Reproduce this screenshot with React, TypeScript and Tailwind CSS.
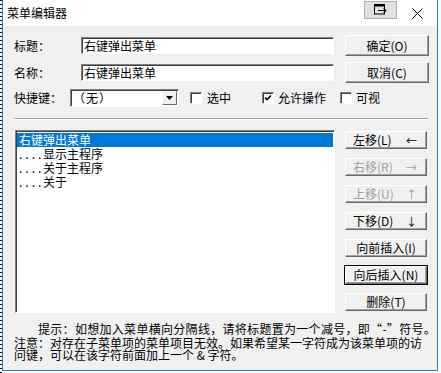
import React from "react";

function Btn({
  label,
  arrow,
  disabled = false,
  isDefault = false,
}: {
  label: string;
  arrow?: string;
  disabled?: boolean;
  isDefault?: boolean;
}) {
  return (
    <div
      className={
        isDefault
          ? "h-[20px] w-[84px] border border-black"
          : "h-[20px] w-[84px] border border-transparent"
      }
    >
      <div
        className={
          "flex h-full w-full items-center border border-t-white border-l-white border-r-[#696969] border-b-[#696969] bg-[#f0f0f0] shadow-[inset_-1px_-1px_0_#a0a0a0] text-[12px] leading-[12px] " +
          (arrow ? "justify-between pl-[7px] pr-[9px] " : "justify-center ") +
          (disabled ? "text-[#a0a0a0]" : "text-black")
        }
      >
        <span>{label}</span>
        {arrow && <span className="text-[11px]">{arrow}</span>}
      </div>
    </div>
  );
}

function TopBtn({ label }: { label: string }) {
  return (
    <div className="flex h-[21px] w-[84px] items-center justify-center border border-t-white border-l-white border-r-[#696969] border-b-[#696969] bg-[#f0f0f0] shadow-[inset_-1px_-1px_0_#a0a0a0] text-[12px] leading-[12px]">
      {label}
    </div>
  );
}

function Check({ checked = false }: { checked?: boolean }) {
  return (
    <div className="flex h-[12px] w-[12px] items-center justify-center border border-t-[#808080] border-l-[#808080] border-r-white border-b-white bg-white shadow-[inset_1px_1px_0_#404040]">
      {checked && (
        <svg width="8" height="8" viewBox="0 0 8 8">
          <path d="M1 3.5 L3 5.5 L7 1.5" stroke="#000" strokeWidth="1.6" fill="none" />
        </svg>
      )}
    </div>
  );
}

function TextBox({ value }: { value: string }) {
  return (
    <div className="flex h-[17px] w-[253px] items-center border border-t-[#808080] border-l-[#808080] border-r-white border-b-white bg-white pl-[2px] shadow-[inset_1px_1px_0_#404040] text-[12px] leading-[12px]">
      {value}
    </div>
  );
}

const rows = [
  { text: "右键弹出菜单", level: 0 },
  { text: "显示主程序", level: 1 },
  { text: "关于主程序", level: 1 },
  { text: "关于", level: 1 },
];

export default function App() {
  return (
    <div className="flex h-[373px] w-[441px] bg-white font-['Noto_Sans_CJK_SC',sans-serif] text-black">
      {/* dotted edge behind the window */}
      <div className="w-[2px] bg-[repeating-linear-gradient(to_bottom,#000_0_1px,transparent_1px_4px)]" />
      <div className="flex h-[371px] w-[436px] flex-col border-x border-b border-[#1883d7]">
        {/* Title bar */}
        <div className="flex h-[26px] items-center bg-white">
          <span className="pl-[4px] text-[12px] leading-[12px]">菜单编辑器</span>
          <div className="ml-auto mb-[7px] flex h-[18px] w-[33px] items-center justify-center border border-[#adadad] bg-[#e1e1e1]">
            <svg width="13" height="11" viewBox="0 0 13 11">
              <rect x="0.5" y="0.5" width="10" height="9.5" fill="none" stroke="#000" />
              <rect x="0.5" y="0.5" width="10" height="2" fill="#000" />
              <path d="M4 6.5 H12 M9.5 4 L12 6.5 L9.5 9" stroke="#000" fill="none" />
            </svg>
          </div>
          <div className="flex w-[40px] items-center justify-center">
            <svg width="11" height="11" viewBox="0 0 11 11">
              <path d="M0.5 0.5 L10.5 10.5 M10.5 0.5 L0.5 10.5" stroke="#000" strokeWidth="1" />
            </svg>
          </div>
        </div>

        {/* Body */}
        <div className="flex flex-1 flex-col bg-[#f0f0f0] pl-[11px] text-[12px] leading-[12px]">
          <div className="mt-[9px] flex h-[21px] items-center">
            <span className="w-[67px]">标题：</span>
            <TextBox value="右键弹出菜单" />
            <div className="ml-[11px]">
              <TopBtn label="确定(O)" />
            </div>
          </div>
          <div className="mt-[6px] flex h-[21px] items-center">
            <span className="w-[67px]">名称：</span>
            <TextBox value="右键弹出菜单" />
            <div className="ml-[11px]">
              <TopBtn label="取消(C)" />
            </div>
          </div>
          <div className="mt-[6px] flex h-[18px] items-center">
            <span className="w-[56px]">快捷键：</span>
            <div className="flex h-[18px] w-[109px] items-center border border-t-[#808080] border-l-[#808080] border-r-white border-b-white bg-white shadow-[inset_1px_1px_0_#404040]">
              <span className="pl-[2px] tracking-[1px]">（无）</span>
              <div className="ml-auto mr-[1px] flex h-[14px] w-[15px] items-center justify-center border border-t-white border-l-white border-r-[#696969] border-b-[#696969] bg-[#f0f0f0]">
                <svg width="7" height="4" viewBox="0 0 7 4">
                  <path d="M0 0 H7 L3.5 4 Z" fill="#000" />
                </svg>
              </div>
            </div>
            <div className="ml-[11px] flex items-center gap-[5px]">
              <Check />
              <span>选中</span>
            </div>
            <div className="ml-[31px] flex items-center gap-[4px]">
              <Check checked />
              <span>允许操作</span>
            </div>
            <div className="ml-[14px] flex items-center gap-[4px]">
              <Check />
              <span>可视</span>
            </div>
          </div>

          {/* separator */}
          <div className="mt-[11px] h-[2px] w-[414px] border-t border-t-[#a0a0a0] border-b border-b-white" />

          {/* list + buttons */}
          <div className="mt-[10px] flex">
            <div className="ml-[1px] h-[183px] w-[320px] border border-t-[#808080] border-l-[#808080] border-r-white border-b-white bg-white p-[1px] shadow-[inset_1px_1px_0_#404040]">
              <div className="pt-[1px]">
                {rows.map((r, i) => (
                  <div
                    key={i}
                    className={
                      i === 0
                        ? "flex h-[14px] items-center bg-[#0078d7] pl-[2px] leading-[12px] text-white"
                        : "flex h-[14px] items-center pl-[2px] leading-[12px] text-black"
                    }
                  >
                    {r.level > 0 && <span className="w-[24px] tracking-[3px]">....</span>}
                    <span>{r.text}</span>
                  </div>
                ))}
              </div>
            </div>
            <div className="ml-[9px] flex flex-col gap-[7px]">
              <Btn label="左移(L)" arrow="←" />
              <Btn label="右移(R)" arrow="→" disabled />
              <Btn label="上移(U)" arrow="↑" disabled />
              <Btn label="下移(D)" arrow="↓" />
              <Btn label="向前插入(I)" />
              <Btn label="向后插入(N)" isDefault />
              <Btn label="删除(T)" />
            </div>
          </div>

          {/* hints */}
          <div className="mt-[10px]">
            <div className="h-[14px] whitespace-nowrap pl-[24px] leading-[12px] tracking-[0.3px]">
              提示：如想加入菜单横向分隔线，请将标题置为一个减号，即“-”符号。
            </div>
            <div className="h-[12px] whitespace-nowrap leading-[12px]">
              注意：对存在子菜单项的菜单项目无效。如果希望某一字符成为该菜单项的访
            </div>
            <div className="h-[12px] whitespace-nowrap leading-[12px]">问键，可以在该字符前面加上一个 &amp; 字符。</div>
          </div>
        </div>
      </div>
    </div>
  );
}
